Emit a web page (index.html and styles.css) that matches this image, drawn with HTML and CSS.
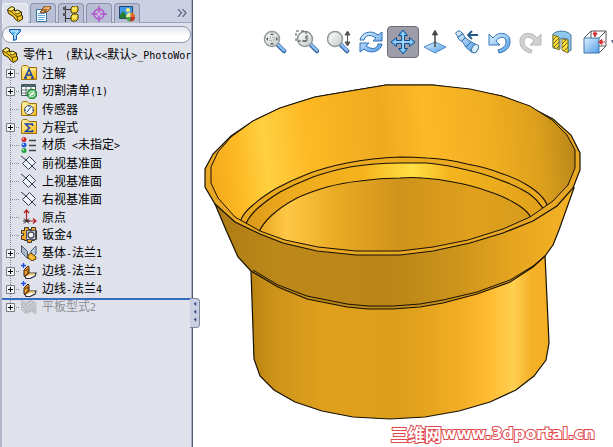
FILE: index.html
```html
<!DOCTYPE html>
<html lang="zh-CN">
<head>
<meta charset="utf-8">
<title>零件1</title>
<link rel="stylesheet" href="styles.css">
</head>
<body>
<svg class="defs" aria-hidden="true">
  <defs>
    <linearGradient id="blue" x1="0" y1="0" x2="1" y2="1"><stop offset="0" stop-color="#e2f3fe"/><stop offset="1" stop-color="#4f9be6"/></linearGradient>
    <linearGradient id="lens" x1="0" y1="0" x2="1" y2="1"><stop offset="0" stop-color="#fff"/><stop offset="1" stop-color="#c3cbc9"/></linearGradient>
    <linearGradient id="gold" x1="0" y1="0" x2="1" y2="1"><stop offset="0" stop-color="#fff3a0"/><stop offset="1" stop-color="#f4b61c"/></linearGradient>
    <symbol id="plus" viewBox="0 0 9 9"><path d="M.5.5h8v8h-8z" fill="#f4f5f8" stroke="#777b84"/><path d="M2 4.500h5M4.500 2v5" stroke="#000"/></symbol>
    <symbol id="part" viewBox="0 0 16 16"><path d="M.5 3.500l4-3 3 1.500v3l3-1 4 2v3l1 1v3l-4 2.500-3-2-2-3-5-3z" fill="#f2c51f" stroke="#2b2508" stroke-linejoin="round"/><path d="M2 3.500l3-2 2 1-3 2zM8 6.500l3-1.500 2 1-3 2z" fill="#fff39a"/><path d="M1 4l3 1.500 6 5 1 4M4 5.500l3-2M10 10.500l5-1M8 7l2 1 4-2" fill="none" stroke="#5d4600"/></symbol>
    <symbol id="folder" viewBox="0 0 16 16"><path d="M.5 2.500L2 .5h4l2 2h7.500v12H.5z" fill="url(#gold)" stroke="#9f700b"/><path d="M1.500 4.500h13" stroke="#fff8c0"/></symbol>
    <symbol id="note" viewBox="0 0 16 16"><use href="#folder"/><path d="M4 13l4-9 4 9M5.500 10h5M3 13h3M10 13h3" fill="none" stroke="#143d9b" stroke-width="1.500"/></symbol>
    <symbol id="cutlist" viewBox="0 0 16 16"><path d="M.5 1.500h14v11H.5z" fill="#fff" stroke="#47565c"/><path d="M1 2h13v2H1z" fill="#47636b"/><path d="M1 7h13M1 10h13M5 2v10M10 2v10" stroke="#60737a"/><circle cx="11" cy="11" r="4.800" fill="#49b45a" stroke="#198331"/><path d="M8 11c0-2 2-3 4-2l1 1M14 11c0 2-2 3-4 2l-1-1M13 7.500v3h-3M9 14.500v-3h3" fill="none" stroke="#fff"/></symbol>
    <symbol id="sensor" viewBox="0 0 16 16"><use href="#folder"/><circle cx="8" cy="9" r="4.500" fill="#f5fbff" stroke="#45526b"/><path d="M6 11l4-5M8 5v1M4 9h1M11 9h1" stroke="#174a90"/></symbol>
    <symbol id="sigma" viewBox="0 0 16 16"><use href="#folder"/><path d="M11.500 7V5h-7l4 4-4 3.500h7V11" fill="none" stroke="#173fae" stroke-width="1.500"/></symbol>
    <symbol id="material" viewBox="0 0 16 16"><circle cx="3" cy="2.500" r="2.500" fill="#d72626"/><circle cx="3" cy="8" r="2.500" fill="#245be0"/><circle cx="3" cy="13.500" r="2.500" fill="#22a53a"/><circle cx="2.300" cy="1.800" r=".8" fill="#fff"/><circle cx="2.300" cy="7.300" r=".8" fill="#fff"/><circle cx="2.300" cy="12.800" r=".8" fill="#fff"/><path d="M8 3.500h7M8 8.500h7M8 13.500h7" stroke="#444" stroke-width="1.500"/></symbol>
    <symbol id="plane" viewBox="0 0 16 16"><path d="M8.500 1.500l6 6-7 7-6-6z" fill="#eef2fa" stroke="#333a46"/><path d="M0 1l5 4M11 11l4 4M5 5l6 6" stroke="#333a46" fill="none"/></symbol>
    <symbol id="origin" viewBox="0 0 16 16"><path d="M5.500 1v11H15M3 4l2.500-3L8 4M12 9.500l3 2.500-3 2.500" fill="none" stroke="#b31c1c" stroke-width="1.200"/><path d="M3 9.500l5 5M8 9.500l-5 5M2 12h7" stroke="#222"/></symbol>
    <symbol id="sheet" viewBox="0 0 16 16"><path d="M.5 3.500h3v-3h4v2h3v-2h4v3h1v9h-2v1h-3v2h-4v-2h-3v-1h-3v-4h2v-2h-2z" fill="#f2aa28" stroke="#3f3a28"/><path d="M5.500 3.500h9v9h-9z" fill="#d1d8e1" stroke="#4d5362"/><circle cx="10" cy="8" r="3" fill="#fff" stroke="#444b58" stroke-width="1.300"/></symbol>
    <symbol id="base" viewBox="0 0 16 16"><path d="M.5.5l6 6v7l-6-6z" fill="#aab7ca" stroke="#46566f"/><path d="M10 6l5-5v8l-5 5z" fill="#b9c8da" stroke="#46566f"/><path d="M7 10l3-2 5 4v2l-4 2-4-3z" fill="#f7ad20" stroke="#574112"/><path d="M9 11l3 2" stroke="#ffe47d"/></symbol>
    <symbol id="edge" viewBox="0 0 16 16"><path d="M3 6l4-4 1 1v6l-4 4-1-1z" fill="#ef9e22" stroke="#332511" transform="translate(0 1)"/><path d="M4 13l4-3 7 0-1 3-5 2.500H5z" fill="#fff" stroke="#30323c" stroke-width="1.200"/><path d="M4 8l3-2v5l-3 2" fill="none" stroke="#693b0b"/><path d="M6 13l3-2h4" stroke="#f3ae31" stroke-width="1.500" fill="none"/><path d="M2.500 5V0M0 2.500h5" stroke="#204ee0" stroke-width="1.300"/></symbol>
    <symbol id="flat" viewBox="0 0 16 16"><path d="M0 1l5 3 5-3 5 3v11l-5-3-5 3-5-5z" fill="#c9ccd1" stroke="#a7abb0" stroke-dasharray="1 1"/><path d="M1 6l4-4M1 9l8-7M3 11L13 3M5 13l9-8M8 13l6-5M12 13l2-2" stroke="#999ea3" stroke-dasharray="1 1"/></symbol>
    <symbol id="glass" viewBox="0 0 24 24"><path d="M15 15l6 6" stroke="#315f9b" stroke-width="4.500" stroke-linecap="round"/><path d="M15 14.500l6 6" stroke="#86bff3" stroke-width="2.500" stroke-linecap="round"/><circle cx="9" cy="9" r="7.500" fill="url(#lens)" stroke="#92999a" stroke-width="1.500"/></symbol>
  </defs>
</svg>
<div class="app">
  <aside class="panel">
    <nav class="tabs" aria-label="管理器">
      <button class="tab active" aria-label="特征"><svg viewBox="0 0 16 16"><use href="#part"/></svg></button>
      <button class="tab" aria-label="属性"><svg viewBox="0 0 16 16"><path d="M1.500 3.500h10v12h-10z" fill="#f9fdff" stroke="#33779f"/><path d="M3 7.500h7M3 9.500h7M3 11.500h7M3 13.500h6" stroke="#63aae0"/><path d="M6 4l4-4h5l1 2-4 4-5 1-2-1 3-2z" fill="#e6a768" stroke="#754119"/><path d="M8 4h4M9 5l2 1" stroke="#6f3c16"/></svg></button>
      <button class="tab" aria-label="配置"><svg viewBox="0 0 16 16"><path d="M2.500 0v16M3 3.500h5M3 12.500h5" stroke="#333" fill="none"/><path d="M0 1h3v3H0zM0 7h3v3H0z" fill="#555"/><path d="M8 2l2-2h4l1 1v4l-2 2H9L8 6zM8 10l2-2h4l1 1v4l-2 2H9l-1-1z" fill="#f7d634" stroke="#4a3900"/><path d="M9 3h4V1M9 11h4V9" stroke="#fff59f" fill="none"/></svg></button>
      <button class="tab" aria-label="尺寸"><svg viewBox="0 0 16 16"><circle cx="8" cy="8" r="5" fill="none" stroke="#b354cf" stroke-width="1.500"/><path d="M0 8h16M8 0v16" stroke="#b354cf" stroke-width="1.500"/><circle cx="8" cy="8" r="1.500" fill="#e9b1ee"/></svg></button>
      <button class="tab" aria-label="外观"><svg viewBox="0 0 16 16"><path d="M.5.5h13v12H.5z" fill="#3c99eb" stroke="#23486b"/><path d="M1 9l3-4 4 5 2-2 4 4H1z" fill="#267a31"/><circle cx="9" cy="4" r="2" fill="#fff06a"/><circle cx="11.500" cy="11" r="4.500" fill="#42a844"/><path d="M11.500 11V6.500A4.500 4.500 0 0116 11z" fill="#ed6b28"/><path d="M11.500 11H7a4.500 4.500 0 014.500-4.500z" fill="#f1e9a9"/><path d="M11.500 11h4.500a4.500 4.500 0 01-4.500 4.500z" fill="#c43228"/></svg></button>
      <button class="more" aria-label="更多"><svg viewBox="0 0 10 8"><path d="M1 0l3.500 4L1 8M5.500 0L9 4 5.500 8" fill="none" stroke="#687089" stroke-width="1.400"/></svg></button>
    </nav>
    <label class="filter">
      <svg viewBox="0 0 12 12"><path d="M.5.5h11v2l-4 4v4l-3 1v-5l-4-4z" fill="#67b9f4" stroke="#1357a5"/><path d="M2 2h7L6 5v5" fill="none" stroke="#e0f6ff"/></svg>
      <input type="text" aria-label="筛选">
    </label>
    <div class="root"><svg class="icon" viewBox="0 0 16 16"><use href="#part"/></svg><span class="label">零件<span class="half">1  (</span>默认<span class="half">&lt;&lt;</span>默认<span class="half">&gt;_PhotoWor</span></span></div>
    <ul class="tree">
      <li><button class="expand" aria-label="展开注解"><svg><use href="#plus"/></svg></button><svg class="icon"><use href="#note"/></svg><span class="label">注解</span></li>
      <li><button class="expand" aria-label="展开切割清单"><svg><use href="#plus"/></svg></button><svg class="icon"><use href="#cutlist"/></svg><span class="label">切割清单<span class="half">(1)</span></span></li>
      <li><span class="branch"></span><svg class="icon"><use href="#sensor"/></svg><span class="label">传感器</span></li>
      <li><button class="expand" aria-label="展开方程式"><svg><use href="#plus"/></svg></button><svg class="icon"><use href="#sigma"/></svg><span class="label">方程式</span></li>
      <li><span class="branch"></span><svg class="icon"><use href="#material"/></svg><span class="label">材质<span class="half"> &lt;</span>未指定<span class="half">&gt;</span></span></li>
      <li><span class="branch"></span><svg class="icon"><use href="#plane"/></svg><span class="label">前视基准面</span></li>
      <li><span class="branch"></span><svg class="icon"><use href="#plane"/></svg><span class="label">上视基准面</span></li>
      <li><span class="branch"></span><svg class="icon"><use href="#plane"/></svg><span class="label">右视基准面</span></li>
      <li><span class="branch"></span><svg class="icon"><use href="#origin"/></svg><span class="label">原点</span></li>
      <li><span class="branch"></span><svg class="icon"><use href="#sheet"/></svg><span class="label">钣金<span class="half">4</span></span></li>
      <li><button class="expand" aria-label="展开基体-法兰1"><svg><use href="#plus"/></svg></button><svg class="icon"><use href="#base"/></svg><span class="label">基体<span class="half">-</span>法兰<span class="half">1</span></span></li>
      <li><button class="expand" aria-label="展开边线-法兰1"><svg><use href="#plus"/></svg></button><svg class="icon"><use href="#edge"/></svg><span class="label">边线<span class="half">-</span>法兰<span class="half">1</span></span></li>
      <li><button class="expand" aria-label="展开边线-法兰4"><svg><use href="#plus"/></svg></button><svg class="icon"><use href="#edge"/></svg><span class="label">边线<span class="half">-</span>法兰<span class="half">4</span></span></li>
      <li class="rolled"><button class="expand" aria-label="展开平板型式2"><svg><use href="#plus"/></svg></button><svg class="icon"><use href="#flat"/></svg><span class="label">平板型式<span class="half">2</span></span></li>
    </ul>
    <button class="splitter" aria-label="折叠面板"><svg viewBox="0 0 10 32"><path d="M7 3v5L4 5.500zM7 12v5l-3-2.500zM7 21v5l-3-2.500z" fill="#3b4f91"/></svg></button>
  </aside>
  <main class="view">
    <div class="toolbar" role="toolbar">
      <button aria-label="整屏显示全图"><svg viewBox="0 0 24 24"><use href="#glass"/><path d="M9 3l2 2H7zM9 15l2-2H7zM3 9l2-2v4zM15 9l-2-2v4z" fill="#555c60"/><path d="M7 7h4v4H7z" fill="none" stroke="#8c9495" stroke-dasharray="1 1"/></svg></button>
      <button aria-label="局部放大"><svg viewBox="0 0 24 24"><use href="#glass" x="1" y="0"/><path d="M1 1h10v10H1z" fill="none" stroke="#555" stroke-dasharray="3 2"/><path d="M12 5v6H7" fill="none" stroke="#555"/></svg></button>
      <button aria-label="放大缩小"><svg viewBox="0 0 24 24"><use href="#glass" x="-1" y="0"/><path d="M20.500 2v13M18 5l2.500-4L23 5zM18 12l2.500 4 2.500-4z" fill="#555" stroke="#555"/></svg></button>
      <button aria-label="旋转"><svg viewBox="0 0 24 24"><path d="M1 10C2 3 12-1 19 5l4-3v9h-9l3-3C11 4 6 5 5 10zM23 14c-1 7-11 11-18 5l-4 3v-9h9l-3 3c6 4 11 3 12-2z" fill="url(#blue)" stroke="#2d70ba" stroke-linejoin="round"/></svg></button>
      <button class="pressed" aria-label="平移" aria-pressed="true"><svg viewBox="0 0 24 24"><path d="M12 0l4.500 5.500h-3v5h5v-3L24 12l-5.500 4.500v-3h-5v5h3L12 24l-4.500-5.500h3v-5h-5v3L0 12l5.500-4.500v3h5v-5h-3z" fill="#6cbcf6" stroke="#174d8c" stroke-linejoin="round"/><path d="M12 2v19M3 12h18" stroke="#b9e5ff"/></svg></button>
      <button aria-label="正视于"><svg viewBox="0 0 24 24"><path d="M1 17l11-5 11 5-11 6z" fill="url(#blue)" stroke="#4b8bc8"/><path d="M12 17V4M10 4.500L12 1l2 3.500z" fill="#444" stroke="#444" stroke-width="1.500"/></svg></button>
      <button aria-label="上一视图"><svg viewBox="0 0 24 24"><path d="M.5 3L4 .5l4 3 2 4 4 3 7 4c4 4 0 9-4 8l-6-5-3-5-4-3-2-4z" fill="url(#blue)" stroke="#3977ae"/><ellipse cx="20" cy="18.500" rx="3" ry="4.500" transform="rotate(30 20 18.500)" fill="#d9effc" stroke="#457c9e"/><path d="M3 7l5-3.500M7 11l4-4M11 17l5-5" stroke="#285f99"/><path d="M23 5h-9M17 1l-4 4 4 4" fill="none" stroke="#27588c" stroke-width="1.800"/></svg></button>
      <button aria-label="撤销"><svg viewBox="0 0 24 24"><path d="M2 4l4 4c6-8 18-5 17 4 0 6-5 10-11 11l-1-3c6-2 8-5 8-8 0-6-7-6-10-1l4 4H2z" fill="url(#blue)" stroke="#3377bb" stroke-linejoin="round"/></svg></button>
      <button aria-label="重做"><svg viewBox="0 0 24 24"><path d="M22 4l-4 4C12 0 0 3 1 12c0 6 5 10 11 11l1-3c-6-2-8-5-8-8 0-6 7-6 10-1l-4 4h11z" fill="#d0d1d1" stroke="#b7b8b8" stroke-linejoin="round"/></svg></button>
      <button aria-label="剖面视图"><svg viewBox="0 0 24 24"><path d="M2 4c4-4 14-4 18 1v15l-3 2V9l-5-1-3 1v10l-7-1z" fill="#91c8ee" stroke="#47799f"/><path d="M2 5l6 2v13l-6-3zM11 9l6 1v13l-6-3z" fill="#ffde39" stroke="#7c7425"/><path d="M2 10l4-4M2 14l6-6M3 17l5-5M5 19l3-3M11 14l4-4M11 18l6-6M13 21l4-4" stroke="#6b6621"/></svg></button>
      <button aria-label="视图定向"><svg viewBox="0 0 24 24"><path d="M1 8l7-7h15v15l-7 7M16 8l7-7M8 1v7M16 16h7" fill="none" stroke="#555"/><path d="M1 8h15v15H1z" fill="url(#blue)" stroke="#3d77ae"/><path d="M12 1v3M10 3l2 4 2-4zM22 12h-3M19 9.500L15.500 12l3.500 2.500z" fill="#d4322e" stroke="#d4322e"/></svg></button>
      <span class="drop"></span>
    </div>
    <svg class="model" viewBox="193 64 420 383" role="img" aria-label="零件模型">
      <defs>
        <linearGradient id="inside" gradientUnits="userSpaceOnUse" x1="210" y1="190" x2="576" y2="150"><stop offset="0" stop-color="#f3a81b"/><stop offset=".08" stop-color="#fdb923"/><stop offset=".16" stop-color="#ffd042"/><stop offset=".28" stop-color="#feb924"/><stop offset=".48" stop-color="#efaa20"/><stop offset=".6" stop-color="#feb928"/><stop offset=".78" stop-color="#efad20"/><stop offset=".9" stop-color="#dda01d"/><stop offset="1" stop-color="#b88619"/></linearGradient>
        <linearGradient id="ring" gradientUnits="userSpaceOnUse" x1="240" y1="0" x2="548" y2="0"><stop offset="0" stop-color="#d99618"/><stop offset=".15" stop-color="#edaa1e"/><stop offset=".4" stop-color="#f6b31d"/><stop offset=".56" stop-color="#ffe044"/><stop offset=".68" stop-color="#f4b51f"/><stop offset="1" stop-color="#dfa01b"/></linearGradient>
        <linearGradient id="floor" gradientUnits="userSpaceOnUse" x1="260" y1="0" x2="530" y2="0"><stop offset="0" stop-color="#eaa824"/><stop offset=".1" stop-color="#ffc746"/><stop offset=".28" stop-color="#eaab24"/><stop offset=".52" stop-color="#d0931b"/><stop offset=".8" stop-color="#dfa11d"/><stop offset="1" stop-color="#d79c1d"/></linearGradient>
        <linearGradient id="flare" gradientUnits="userSpaceOnUse" x1="215" y1="0" x2="575" y2="0"><stop offset="0" stop-color="#ae7c14"/><stop offset=".18" stop-color="#bc8819"/><stop offset=".5" stop-color="#bc8718"/><stop offset=".66" stop-color="#cb931b"/><stop offset=".84" stop-color="#e7a61f"/><stop offset="1" stop-color="#f6b328"/></linearGradient>
        <linearGradient id="cylinder" gradientUnits="userSpaceOnUse" x1="251" y1="0" x2="549" y2="0"><stop offset="0" stop-color="#b98412"/><stop offset=".08" stop-color="#ce931a"/><stop offset=".24" stop-color="#dfa01d"/><stop offset=".5" stop-color="#dc9e1b"/><stop offset=".7" stop-color="#f2ad24"/><stop offset=".8" stop-color="#ffbc32"/><stop offset=".88" stop-color="#ffcf50"/><stop offset=".94" stop-color="#f4b027"/><stop offset="1" stop-color="#f4af23"/></linearGradient>
        <path id="lip" d="M211 167v16l7 15 17 19 25 14 25 9 33 7 38 4h44l33-4 35-7 35-11 27-12 23-16 15-16 7-17v-18l-8-15-15-15-22-14-28-10-32-7-37-4h-47l-36 6-35 6-35 11-27 13-22 16-13 15z"/>
        <clipPath id="opening"><use href="#lip"/></clipPath>
      </defs>
      <path d="M250 260l1 11 3 88 6 17 14 14 21 12 27 9 31 6 37 2 35-2 34-6 31-9 26-12 18-14 12-16 3-17-4-88z" fill="url(#cylinder)" stroke="#171103" stroke-width="1.200"/>
      <path d="M215 204l11 26 12 27 13 14 27 16 29 12 40 8 21 2h25l27-2 23-4 34-9 33-12 23-15 12-11 8-11 6-15 15-42z" fill="url(#flare)" stroke="#171103" stroke-width="1.200"/>
      <path d="M253 270l25 15 29 11 40 8 21 2h25l27-2 23-4 34-8 33-12 23-14 12-10" fill="none" stroke="#171103"/>
      <path d="M205 169v18l10 17 20 18 25 12 23 9 34 8 39 4h44l33-4 37-8 33-10 30-12 24-15 16-18 7-18v-17l-9-18-18-16-23-12-28-11-32-6-37-5h-47l-36 6-35 6-35 11-27 13-22 15-18 18z" fill="#e9a824" stroke="#171103" stroke-width="1.200"/>
      <use href="#lip" fill="url(#inside)"/>
      <g clip-path="url(#opening)" stroke="#171103" stroke-width="1.100">
        <path d="M240 222q3-9 13-17 10-9 24-17 15-8 33-15 17-6 37-10 25-5 53-6 14 0 27 1 21 1 40 6 18 3 33 9 16 5 27 12 10 6 15 12 5 5 7 14v60H240z" fill="#eaa91e"/>
        <path d="M245 226q3-9 13-18 9-8 22-16 15-8 33-15 17-6 37-10 25-4 50-4h27q21 2 40 7 18 4 33 10 17 6 28 13 7 5 10 9 4 4 7 10v60H245z" fill="url(#ring)"/>
        <path d="M258 234q4-10 14-19 10-9 25-17 13-6 30-11 15-4 33-6 20-3 40-3 12-1 23 0 16 1 30 4 18 3 34 9 16 5 26 11 9 5 14 10 3 3 5 8v45H258z" fill="url(#floor)"/>
      </g>
      <use href="#lip" fill="none" stroke="#171103"/>
    </svg>
    <a class="site" href="#"><span class="name">三维网</span>www.3dportal.cn</a>
  </main>
</div>
</body>
</html>
```
FILE: styles.css
```css
* {
  box-sizing: border-box;
}

body {
  margin: 0;
  background: #fff;
  color: #000;
  font: 12px/18px "Noto Sans CJK SC", sans-serif;
}

button {
  padding: 0;
  border: 0;
  background: none;
  font: inherit;
}

svg {
  display: block;
}

.defs {
  position: absolute;
  width: 0;
  height: 0;
}

.app {
  display: flex;
  min-height: 100vh;
}

.panel {
  position: relative;
  flex: 0 0 193px;
  min-width: 0;
  padding-right: 1px;
  border-left: 2px solid #b1b7cb;
  border-right: 1px solid #4e5876;
  background: #dfe2eb;
  box-shadow: inset -1px 0 #a8afc4;
}

.tabs {
  display: flex;
  gap: 2px;
  height: 23px;
  padding-top: 3px;
  background: #cbd0e2;
  border-bottom: 1px solid #9aa1b8;
}

.tab {
  display: flex;
  width: 26px;
  height: 20px;
  align-items: center;
  justify-content: center;
  border: 1px solid #8e94ac;
  border-bottom: 0;
  border-radius: 4px 4px 0 0;
  background: #b8bed3;
}

.tab.active {
  border-color: #eef0f6;
  background: #dfe2eb;
}

.tab svg,
.icon {
  flex: none;
  width: 16px;
  height: 16px;
}

.more {
  margin-left: auto;
  padding-right: 4px;
}

.more svg {
  width: 10px;
  height: 8px;
}

.filter {
  display: flex;
  align-items: center;
  height: 17px;
  margin: 3px 0;
  padding-left: 6px;
  border: 1px solid #8e95aa;
  border-radius: 9px;
  background: linear-gradient(#e4e8f1, #fff 60%);
}

.filter svg {
  width: 12px;
  height: 12px;
}

.filter input {
  flex: 1;
  min-width: 0;
  height: 14px;
  border: 0;
  outline: 0;
  background: transparent;
}

.root {
  display: flex;
  align-items: center;
  gap: 5px;
  height: 18px;
  overflow: hidden;
}

.label {
  white-space: pre;
  line-height: 18px;
}

.half {
  font-family: "DejaVu Sans Mono", monospace;
  font-size: 10px;
}

.tree {
  margin: 0;
  padding: 0;
  list-style: none;
}

.tree li {
  display: flex;
  align-items: center;
  height: 18px;
  background: repeating-linear-gradient(#858a96 0 1px, transparent 1px 2px) 8px 0 / 1px 18px no-repeat;
}

.tree .icon {
  margin-right: 5px;
}

.expand,
.branch {
  flex: none;
  width: 19px;
  height: 18px;
  background: repeating-linear-gradient(90deg, #858a96 0 1px, transparent 1px 2px) 8px 9px / 10px 1px no-repeat;
}

.expand {
  padding-left: 4px;
}

.expand svg {
  width: 9px;
  height: 9px;
}

.tree .rolled {
  box-shadow: inset 0 2px #346dbd;
  background-size: 1px 8px;
  color: #8d9199;
}

.splitter {
  position: absolute;
  top: 298px;
  right: -8px;
  width: 10px;
  height: 30px;
  border: 1px solid #7f88a3;
  border-left: 0;
  border-radius: 0 4px 4px 0;
  background: #cbd0e0;
}

.splitter svg {
  width: 9px;
  height: 28px;
}

.view {
  position: relative;
  display: flex;
  flex: 1;
  flex-direction: column;
  min-width: 0;
}

.toolbar {
  display: flex;
  justify-content: flex-end;
  height: 64px;
  padding-top: 26px;
}

.toolbar button {
  display: flex;
  width: 32px;
  height: 32px;
  align-items: center;
  justify-content: center;
  border-radius: 4px;
}

.toolbar button.pressed {
  border: 1px solid #6d6e79;
  background: #9c9da9;
}

.toolbar svg {
  width: 24px;
  height: 24px;
}

.drop {
  width: 2px;
  height: 4px;
  margin-top: 14px;
  background: #536585;
  clip-path: polygon(0 0, 100% 0, 100% 100%);
}

.model {
  flex: 1;
  width: 100%;
  min-height: 0;
}

.site {
  position: absolute;
  right: 18px;
  bottom: 3px;
  display: flex;
  align-items: center;
  color: #fff;
  font: bold 16px/20px "DejaVu Sans", sans-serif;
  text-decoration: none;
  -webkit-text-stroke: 2px #e0484c;
  paint-order: stroke fill;
}

.name {
  font: bold 17px/20px "Noto Sans CJK SC", sans-serif;
}
```
